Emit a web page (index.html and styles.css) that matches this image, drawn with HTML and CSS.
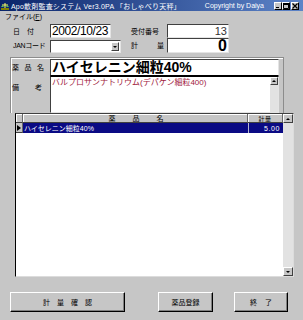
FILE: index.html
```html
<!DOCTYPE html>
<html lang="ja">
<head>
  <meta charset="UTF-8">
  <title>Apo散剤監査システム</title>
  <link rel="stylesheet" href="styles.css">
</head>
<body>

  <div class="titlebar">
    <svg class="app-icon" viewBox="0 0 8 8">
      <rect x="0" y="6" width="8" height="2" fill="#808000"/>
      <path d="M4 1 L4 6 M1 3 L7 3" stroke="#ffff60" stroke-width="1"/>
      <path d="M0 5 L1.5 3 L3 5 Z M5 5 L6.5 3 L8 5 Z" fill="#60c060"/>
    </svg>
    <span class="title">Apo散剤監査システム Ver3.0PA 「おしゃべり天秤」</span>
    <span class="copyright">Copyright by Daiya</span>
    <div class="caption-buttons">
      <span class="cap-btn">
        <svg viewBox="0 0 6 6"><rect x="1" y="4" width="3" height="1" fill="#000"/></svg>
      </span>
      <span class="cap-btn">
        <svg viewBox="0 0 6 6"><path d="M0.5 0.5 H5.5 V5.5 H0.5 Z" fill="none" stroke="#000" stroke-width="1"/><rect x="0" y="0" width="6" height="2" fill="#000"/></svg>
      </span>
      <span class="cap-btn close">
        <svg viewBox="0 0 6 6"><path d="M0.5 0.5 L5.5 5.5 M5.5 0.5 L0.5 5.5" stroke="#000" stroke-width="1.2"/></svg>
      </span>
    </div>
  </div>

  <div class="menubar">ファイル(<u>F</u>)</div>

  <div class="top-fields">
    <span class="label spaced-7">日付</span>
    <div class="field date-field">2002/10/23</div>
    <span class="label">受付番号</span>
    <div class="field number-field">13</div>

    <span class="label jan">JANコード</span>
    <div class="field combo">
      <span class="combo-arrow"><i class="tri-down"></i></span>
    </div>
    <span class="label spaced-19">計量</span>
    <div class="field number-field weight">0</div>
  </div>

  <div class="drug-panel">
    <div class="panel-row">
      <span class="label spaced-5">薬品名</span>
      <div class="field drug-name">ハイセレニン細粒40%</div>
    </div>
    <div class="panel-row">
      <span class="label memo-label spaced-16">備考</span>
      <div class="memo">
        <div class="memo-text">バルプロサンナトリウム(デパケン細粒400)</div>
        <div class="memo-scroll">
          <span class="scroll-btn small"><i class="tri-up"></i></span>
          <span class="scroll-track"></span>
        </div>
      </div>
    </div>
  </div>

  <div class="grid">
    <div class="grid-main">
      <div class="grid-row grid-head">
        <span class="cell col-ind"></span>
        <span class="cell col-name"><span class="head-name">薬品名</span></span>
        <span class="cell col-qty head-qty">計量</span>
      </div>
      <div class="grid-row selected">
        <span class="cell col-ind"><i class="tri-right"></i></span>
        <span class="cell col-name">ハイセレニン細粒40%</span>
        <span class="cell col-qty">5.00</span>
      </div>
    </div>
    <div class="grid-scroll">
      <span class="scroll-btn"><i class="tri-up"></i></span>
      <span class="scroll-track"></span>
      <span class="scroll-btn"><i class="tri-down"></i></span>
    </div>
  </div>

  <div class="buttons">
    <button class="btn btn-confirm">計量確認</button>
    <button class="btn btn-register">薬品登録</button>
    <button class="btn btn-exit">終了</button>
  </div>

</body>
</html>
```

FILE: styles.css
```css
* {
  box-sizing: border-box;
}

body {
  margin: 0;
  width: 303px;
  height: 320px;
  overflow: hidden;
  background-color: #c6c6c6;
  font-family: "Liberation Sans", "Noto Sans CJK JP", sans-serif;
  font-size: 7px;
  color: #000;
}

/* title bar */
.titlebar {
  height: 11px;
  display: flex;
  align-items: center;
  padding: 0 4px 0 1px;
  background: linear-gradient(90deg, #0a246a, #5d84c8);
  color: #fff;
  white-space: nowrap;
}

.app-icon {
  width: 8px;
  height: 8px;
  margin-right: 2px;
}

.title {
  letter-spacing: 0.2px;
}

.copyright {
  margin-left: auto;
  margin-right: 10px;
}

.caption-buttons {
  display: flex;
}

.cap-btn {
  width: 8px;
  height: 8px;
  background-color: #c6c6c6;
  border: 1px solid;
  border-color: #fff #000 #000 #fff;
  display: flex;
}

.cap-btn svg {
  width: 6px;
  height: 6px;
}

.cap-btn.close {
  margin-left: 1px;
}

.menubar {
  height: 11px;
  padding: 2px 0 0 5px;
  line-height: 8px;
}

/* top fields */
.top-fields {
  display: grid;
  grid-template-columns: 38px 81px 36px 62px;
  grid-template-rows: 14px 15px;
  align-items: center;
  margin: 2px 0 0 12px;
}

.label {
  line-height: 9px;
  white-space: nowrap;
}

.spaced-5 { letter-spacing: 5.5px; }
.spaced-7 { letter-spacing: 7px; padding-left: 1px; }
.spaced-16 { letter-spacing: 16px; }
.spaced-19 { letter-spacing: 19px; }

.jan {
  padding-left: 1px;
  letter-spacing: -0.3px;
}

.field {
  height: 100%;
  background-color: #fff;
  border: 1px solid;
  border-color: #404040 #e4e4e4 #e4e4e4 #404040;
  white-space: nowrap;
  overflow: hidden;
}

.date-field {
  width: 61px;
  padding-left: 1px;
  font-size: 12px;
  line-height: 12px;
  letter-spacing: -0.4px;
}

.number-field {
  text-align: right;
  padding-right: 1px;
  font-size: 11px;
  line-height: 12px;
  color: #333;
}

.weight {
  font-size: 16px;
  font-weight: bold;
  line-height: 13px;
  color: #000;
}

.combo {
  width: 71px;
  height: 13px;
  margin-top: 2px;
  display: flex;
  justify-content: flex-end;
  padding: 1px;
}

.combo-arrow {
  width: 8px;
  background-color: #c6c6c6;
  border: 1px solid;
  border-color: #fff #404040 #404040 #fff;
  display: flex;
  align-items: center;
  justify-content: center;
}

/* drug panel */
.drug-panel {
  width: 274px;
  margin: 4px 0 0 10px;
  padding: 1px 4px 0 1px;
  border: 1px solid #8c8c8c;
  border-bottom: none;
  box-shadow: inset 1px 1px 0 #fff;
}

.panel-row {
  display: flex;
  align-items: center;
}

.panel-row .label {
  width: 38px;
}

.drug-name {
  flex: 1;
  height: 17px;
  padding-left: 1px;
  font-size: 14px;
  font-weight: bold;
  line-height: 15px;
  border-bottom-color: #000;
}

.panel-row .memo-label {
  align-self: flex-start;
  margin-top: 7px;
}

.memo {
  flex: 1;
  height: 37px;
  display: flex;
  background-color: #fff;
  border: 1px solid;
  border-color: #000 #e4e4e4 #e4e4e4 #404040;
}

.memo-text {
  flex: 1;
  padding: 1px 0 0 1px;
  font-size: 8px;
  line-height: 9px;
  color: #a0203c;
  white-space: nowrap;
}

.memo-scroll {
  width: 8px;
  display: flex;
  flex-direction: column;
}

/* scroll bars */
.scroll-btn {
  height: 9px;
  background-color: #c6c6c6;
  border: 1px solid;
  border-color: #fff #404040 #404040 #fff;
  display: flex;
  align-items: center;
  justify-content: center;
}

.scroll-btn.small {
  height: 8px;
}

.scroll-track {
  flex: 1;
  background-color: #e2e2e2;
}

.tri-up,
.tri-down {
  width: 0;
  height: 0;
  border-left: 2px solid transparent;
  border-right: 2px solid transparent;
}

.tri-up {
  border-bottom: 2px solid #000;
}

.tri-down {
  border-top: 2px solid #000;
}

.tri-right {
  width: 0;
  height: 0;
  border-top: 3px solid transparent;
  border-bottom: 3px solid transparent;
  border-left: 4px solid #000;
}

/* grid */
.grid {
  width: 279px;
  height: 164px;
  margin-left: 15px;
  display: flex;
  background-color: #fff;
  border: 1px solid;
  border-color: #404040 #dcdcdc #dcdcdc #000;
}

.grid-main {
  flex: 1;
}

.grid-row {
  display: flex;
  height: 10px;
}

.cell {
  display: flex;
  align-items: center;
  white-space: nowrap;
}

.col-ind {
  width: 7px;
  background-color: #c6c6c6;
  border-right: 1px solid #6a6a6a;
  border-bottom: 1px solid #404040;
  justify-content: center;
}

.col-name {
  flex: 1;
}

.col-qty {
  width: 35px;
  justify-content: flex-end;
}

.grid-head {
  height: 9px;
}

.grid-head .cell {
  background-color: #c6c6c6;
  border-right: 1px solid #6a6a6a;
  border-bottom: 1px solid #404040;
  box-shadow: inset 1px 1px 0 #fff;
}

.grid-head .col-name {
  justify-content: center;
}

.head-name {
  letter-spacing: 17px;
  padding-left: 19px;
}

.head-qty {
  justify-content: center;
  font-size: 6px;
  letter-spacing: 0.5px;
}

.selected .col-name,
.selected .col-qty {
  background-color: #0a0a84;
  color: #fff;
}

.selected .col-name {
  padding-left: 1px;
}

.selected .col-qty {
  padding-right: 3px;
  border-left: 1px solid #b8b8d0;
  letter-spacing: 0.6px;
}

.grid-scroll {
  width: 10px;
  display: flex;
  flex-direction: column;
}

/* bottom buttons */
.buttons {
  display: flex;
  margin-top: 15px;
  padding-left: 10px;
}

.btn {
  height: 20px;
  padding: 0;
  background-color: #c6c6c6;
  border: 1px solid;
  border-color: #fff #000 #000 #fff;
  box-shadow: inset -1px -1px 0 #808080;
  font-family: "Liberation Sans", "Noto Sans CJK JP", sans-serif;
  font-size: 7px;
  color: #000;
}

.btn-confirm {
  width: 115px;
  letter-spacing: 7px;
  padding-left: 7px;
}

.btn-register {
  width: 55px;
  margin-left: 33px;
}

.btn-exit {
  width: 54px;
  margin-left: 21px;
  letter-spacing: 8px;
  padding-left: 8px;
}
```
